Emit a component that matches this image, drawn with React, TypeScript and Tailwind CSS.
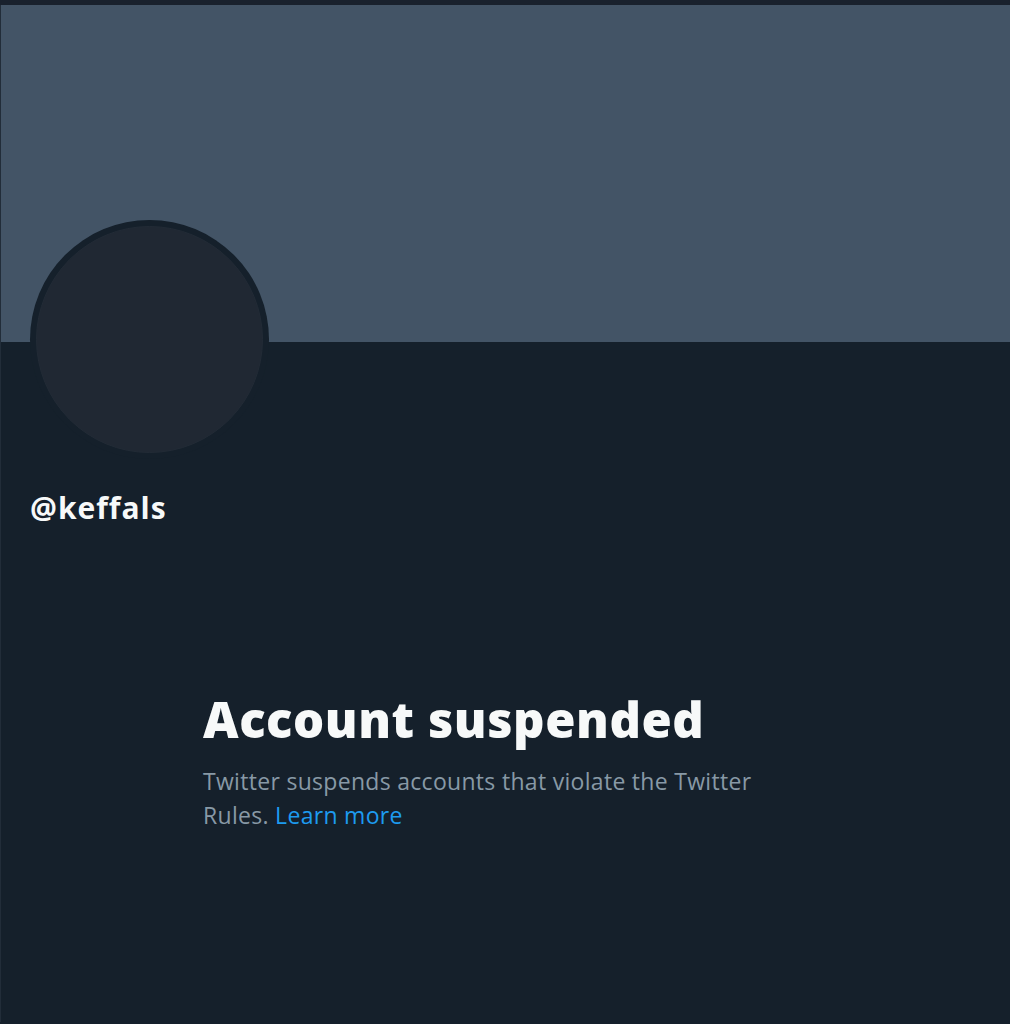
const App = () => {
    return (
        <div className="min-h-[1024px] w-[1010px] bg-[#15202b] font-['Open_Sans',sans-serif]">
            <div className="h-[5px] bg-[#19212d]" />
            <div className="border-l border-[#222d39]">
                <div className="h-[337px] bg-[#435466]" />
                <div className="pl-[29px] -mt-[122px]">
                    <div className="w-[239px] h-[239px] rounded-full bg-[#15202b] p-[6px]">
                        <div className="w-full h-full rounded-full bg-[#202833] border border-[#222b36]" />
                    </div>
                </div>
                <div className="pl-[29px] mt-[29px]">
                    <h2 className="text-[30px] font-bold text-[#f7f9f9] leading-[40px] tracking-[1px]">@keffals</h2>
                </div>
                <div className="pl-[202px] mt-[161px] pb-[190px]">
                    <h1 className="text-[49px] font-extrabold text-[#f7f9f9] leading-[60px] tracking-[0.55px]">Account suspended</h1>
                    <p className="mt-[15px] w-[580px] text-[23px] text-[#8899a6] leading-[34px] tracking-[0.3px]">
                        Twitter suspends accounts that violate the Twitter Rules.{" "}
                        <a href="#" className="text-[#1d9bf0]">Learn more</a>
                    </p>
                </div>
            </div>
        </div>
    );
};

export default App;
